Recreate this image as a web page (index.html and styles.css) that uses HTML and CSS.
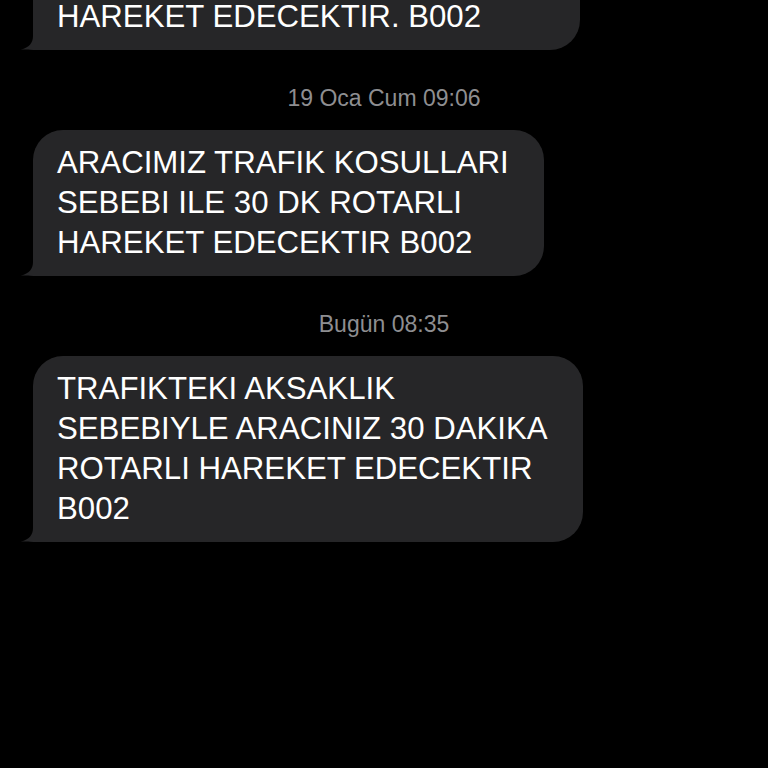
FILE: index.html
```html
<!DOCTYPE html>
<html lang="tr">
<head>
    <meta charset="UTF-8">
    <meta name="viewport" content="width=device-width, initial-scale=1.0">
    <title>Mesajlar</title>
    <link rel="stylesheet" href="styles.css">
</head>
<body>
    <div class="thread">
        <div class="bubble bubble-cut">
            HAREKET EDECEKTIR. B002
            <svg class="tail" width="26" height="22" viewBox="0 0 26 22"><path d="M13 0 L13 8 C13 15 9 19.5 1 21.6 C6 22 12 22 26 22 L26 0 Z"/></svg>
        </div>

        <div class="stamp">19 Oca Cum 09:06</div>

        <div class="bubble">
            ARACIMIZ TRAFIK KOSULLARI<br>
            SEBEBI ILE 30 DK ROTARLI<br>
            HAREKET EDECEKTIR B002
            <svg class="tail" width="26" height="22" viewBox="0 0 26 22"><path d="M13 0 L13 8 C13 15 9 19.5 1 21.6 C6 22 12 22 26 22 L26 0 Z"/></svg>
        </div>

        <div class="stamp">Bugün 08:35</div>

        <div class="bubble">
            TRAFIKTEKI AKSAKLIK<br>
            SEBEBIYLE ARACINIZ 30 DAKIKA<br>
            ROTARLI HAREKET EDECEKTIR<br>
            B002
            <svg class="tail" width="26" height="22" viewBox="0 0 26 22"><path d="M13 0 L13 8 C13 15 9 19.5 1 21.6 C6 22 12 22 26 22 L26 0 Z"/></svg>
        </div>
    </div>
</body>
</html>
```

FILE: styles.css
```css
html, body {
    background-color: #000;
}
body {
    margin: 0;
    height: 768px;
    overflow: hidden;
    font-family: "Liberation Sans", Arial, sans-serif;
}
.thread {
    display: flex;
    flex-direction: column;
    align-items: flex-start;
}
.bubble {
    position: relative;
    margin-left: 33px;
    padding: 13px 35px 13px 24px;
    background-color: #262628;
    color: #fff;
    font-size: 31.2px;
    line-height: 40px;
    white-space: nowrap;
    border-radius: 30px 30px 30px 0;
}
.bubble-cut {
    width: 488px;
    margin-top: -80px;
    padding-top: 77px;
}
.tail {
    position: absolute;
    left: -13px;
    bottom: 0;
    fill: #262628;
}
.stamp {
    align-self: stretch;
    text-align: center;
    margin: 34px 0 18px;
    color: #8e8e91;
    font-size: 23px;
    line-height: 28px;
}
```
